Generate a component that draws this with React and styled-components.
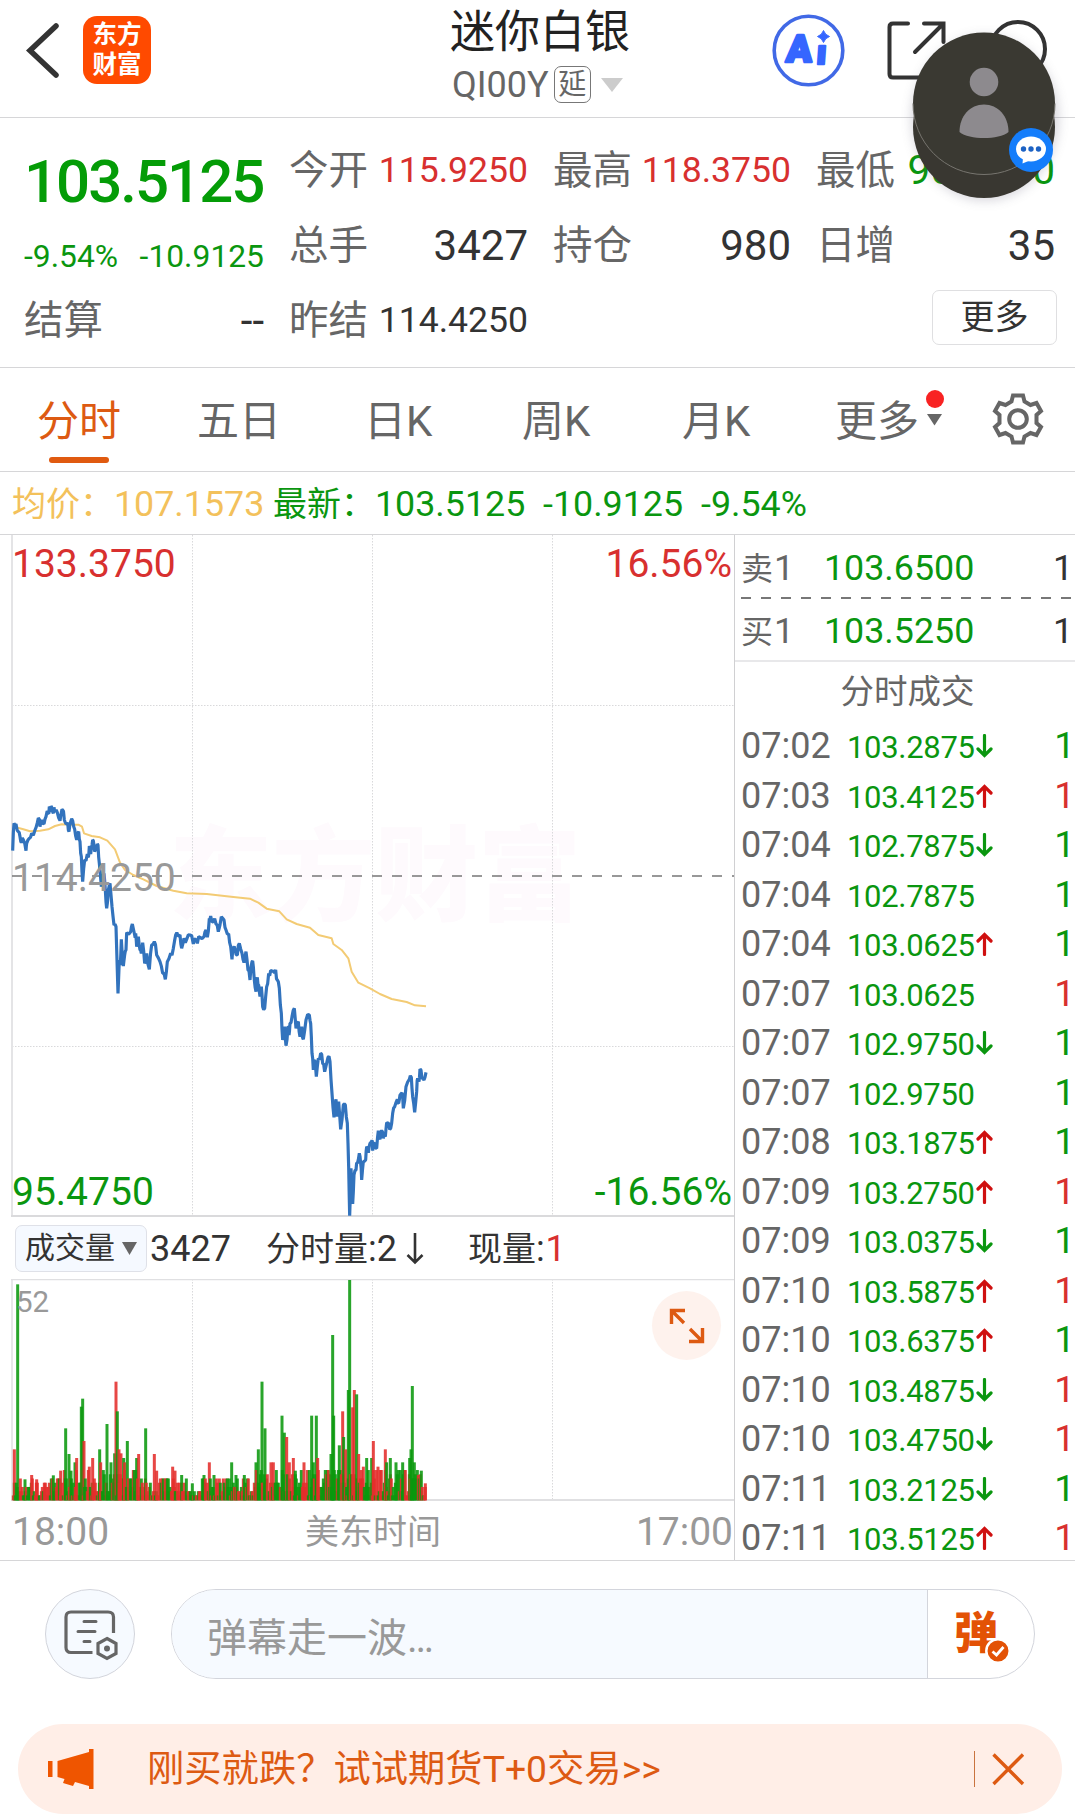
import React from 'react';
import styled, { createGlobalStyle, css } from 'styled-components';

const GREEN = '#0a960f';
const RED = '#d8302f';
const ORANGE = '#dd5a12';

const GlobalStyle = createGlobalStyle`
	* {
		box-sizing: border-box;
	}
	body {
		margin: 0;
		background: #fff;
		font-family: Roboto, 'Noto Sans CJK SC', sans-serif;
		line-height: 1;
		color: #333;
	}
	svg {
		display: block;
		flex: none;
	}
`;

const Screen = styled.div`
	position: relative;
	display: flex;
	flex-direction: column;
	width: 1075px;
	height: 1816px;
	overflow: hidden;
	white-space: nowrap;
`;

/* header */
const Header = styled.header`
	display: grid;
	grid-template-columns: 450px 180px 1fr;
	height: 118px;
	border-bottom: 1px solid #d6d6d8;
`;
const HeaderLeft = styled.div`
	display: flex;
	align-items: flex-start;
	gap: 22px;
	padding: 16px 0 0 25px;
`;
const Logo = styled.div`
	display: flex;
	flex-direction: column;
	align-items: center;
	justify-content: center;
	width: 68px;
	height: 68px;
	border-radius: 14px;
	background: #ff4a00;
	color: #fff;
	font-size: 24.5px;
	font-weight: 700;
	line-height: 30px;
`;
const TitleBlock = styled.div`
	display: flex;
	flex-direction: column;
	gap: 11px;
	padding-top: 10px;
`;
const Title = styled.h1`
	margin: 0;
	font-size: 45px;
	font-weight: 400;
	color: #222;
`;
const Code = styled.div`
	display: flex;
	align-items: center;
	height: 37px;
	font-size: 36px;
	color: #666;
	padding-left: 2px;
`;
const DelayTag = styled.span`
	display: flex;
	align-items: center;
	justify-content: center;
	width: 37px;
	height: 37px;
	margin: 0 10px 0 5px;
	border: 1px solid #777;
	border-radius: 7px;
	font-size: 28px;
`;
const HeaderRight = styled.div`
	display: flex;
	align-items: flex-start;
	padding: 14px 0 0 142px;
`;

/* quote */
const Quote = styled.section`
	display: grid;
	grid-template-columns: 240px 239px 238px 239px;
	grid-template-rows: repeat(3, 75px);
	column-gap: 25px;
	height: 250px;
	padding: 15px 20px 0 24px;
	border-bottom: 1px solid #d6d6d8;
`;
const PriceCell = styled.div`
	grid-row: span 2;
	display: flex;
	flex-direction: column;
	gap: 29px;
	padding-top: 19px;
	color: ${GREEN};
`;
const Price = styled.div`
	font-size: 60px;
	font-weight: 500;
	letter-spacing: -2px;
	color: #049c07;
`;
const Changes = styled.div`
	display: flex;
	justify-content: space-between;
	font-size: 31.8px;
`;
const Stat = styled.div`
	display: flex;
	align-items: center;
	justify-content: space-between;
	color: ${(p) => p.$color || '#333'};
	font-size: ${(p) => p.$size || 35.6}px;
`;
const StatLabel = styled.span`
	font-size: 39.5px;
	color: #666;
`;
const MoreCell = styled.div`
	display: flex;
	align-items: center;
	justify-content: flex-end;
	margin-right: -2px;
	padding-bottom: 7px;
`;
const MoreButton = styled.button`
	width: 125px;
	height: 55px;
	border: 1px solid #dfdfe1;
	border-radius: 7px;
	background: #fff;
	color: #333;
	font: inherit;
	font-size: 34px;
	padding: 0;
`;

/* tabs */
const Tabs = styled.nav`
	display: flex;
	align-items: stretch;
	height: 104px;
	padding-left: 37px;
	border-bottom: 1px solid #d6d6d8;
`;
const Tab = styled.div`
	position: relative;
	display: flex;
	align-items: center;
	width: ${(p) => p.$width}px;
	padding-top: 5px;
	font-size: 42px;
	color: ${(p) => (p.$active ? ORANGE : '#666')};
	${(p) =>
		p.$active &&
		css`
			&::after {
				content: '';
				position: absolute;
				left: 12px;
				bottom: 8px;
				width: 60px;
				height: 6px;
				border-radius: 3px;
				background: #e05a10;
			}
		`}
`;
const TabIcon = styled.div`
	display: flex;
	align-items: center;
	padding-bottom: 1px;
`;
const Dot = styled.i`
	position: absolute;
	left: 91px;
	top: 22px;
	width: 18px;
	height: 18px;
	border-radius: 50%;
	background: #f82222;
`;

const InfoRow = styled.div`
	display: flex;
	align-items: center;
	height: 63px;
	padding: 3px 0 0 12px;
	border-bottom: 1px solid #d6d6d8;
	font-size: 35.8px;
`;
const Info = styled.span`
	display: flex;
	align-items: center;
	width: ${(p) => p.$width}px;
	color: ${(p) => p.$color};
`;
const InfoLabel = styled.span`
	font-size: 34px;
`;

/* main */
const Main = styled.main`
	display: flex;
	height: 1026px;
	border-bottom: 1px solid #d6d6d8;
`;
const ChartColumn = styled.section`
	flex: none;
	width: 735px;
	padding-left: 11px;
	border-right: 1px solid #d0d0d2;
`;
const Plot = styled.div`
	position: relative;
	height: ${(p) => p.$height}px;
`;
const PlotLabel = styled.span`
	position: absolute;
	top: ${(p) => p.$top}px;
	${(p) => (p.$right ? 'right: 2px;' : `left: ${p.$left || 1}px;`)}
	font-size: ${(p) => p.$size || 39}px;
	color: ${(p) => p.$color};
`;
const Watermark = styled.div`
	position: absolute;
	left: 158px;
	top: 291px;
	font-size: 103px;
	font-weight: 900;
	color: #fefafd;
`;
const ChartLayer = styled.div`
	position: relative;
`;
const VolumeBar = styled.div`
	display: flex;
	align-items: center;
	height: 62px;
	padding: 1px 0 0 4px;
	font-size: 36px;
`;
const Indicator = styled.button`
	display: flex;
	align-items: center;
	justify-content: space-between;
	width: 132px;
	height: 47px;
	margin: -1px 3px 0 0;
	padding: 0 9px 0 9px;
	border: 1px solid #dfe1e8;
	border-radius: 7px;
	background: #f5f9ff;
	color: #333;
	font: inherit;
	font-size: 30px;
`;
const VolumeStat = styled.span`
	display: flex;
	align-items: center;
	margin-left: ${(p) => p.$gap}px;
`;
const VolumeLabel = styled.span`
	font-size: ${(p) => p.$size}px;
`;
const Current = styled.span`
	margin-left: 1px;
	color: ${RED};
`;
const ExpandButton = styled.button`
	position: absolute;
	left: 641px;
	top: 12px;
	display: grid;
	place-items: center;
	width: 69px;
	height: 69px;
	padding: 0;
	border: 0;
	border-radius: 50%;
	background: #fef2ed;
`;
const TimeAxis = styled.div`
	display: flex;
	align-items: center;
	justify-content: space-between;
	height: 61px;
	padding: 4px 1px 0 1px;
	font-size: 39px;
	color: #999;
`;
const AxisCaption = styled.span`
	padding: 0 0 2px 1px;
	font-size: 34px;
`;

/* order book and ticks */
const Side = styled.aside`
	flex: 1;
	min-width: 0;
	padding: 1px 0 0 6px;
`;
const BookRow = styled.div`
	display: grid;
	grid-template-columns: 83px 1fr auto;
	align-items: center;
	height: ${(p) => p.$height}px;
	padding: 5px 2px 0 0;
	font-size: 35.8px;
	color: #333;
`;
const BookLabel = styled.span`
	display: flex;
	align-items: center;
	gap: 1px;
	color: #666;
`;
const BookSide = styled.span`
	font-size: 32px;
`;
const BookPrice = styled.span`
	color: ${GREEN};
`;
const SideTitle = styled.h2`
	margin: 0 0 0 -6px;
	height: 61px;
	border-top: 2px solid #e8e8ea;
	font-size: 33.5px;
	font-weight: 400;
	line-height: 60px;
	text-align: center;
	text-indent: 5px;
	color: #666;
`;
const Tick = styled.div`
	display: grid;
	grid-template-columns: 106px 129px 1fr auto;
	align-items: baseline;
	height: 49.5px;
	padding: 6px 0 0 0;
	font-size: 36px;
	color: #666;
`;
const TickPrice = styled.span`
	font-size: 31px;
	color: ${GREEN};
	letter-spacing: -0.3px;
`;
const Quantity = styled.span`
	font-size: 37px;
	color: ${(p) => (p.$up ? RED : GREEN)};
`;
const ArrowIcon = styled.svg`
	margin-bottom: 3px;
`;

/* footer */
const CommentBar = styled.div`
	display: flex;
	gap: 36px;
	padding: 28px 40px 0 45px;
`;
const RoundButton = styled.button`
	display: grid;
	place-items: center;
	width: 90px;
	height: 90px;
	padding: 0;
	border: 1px solid #d3d5dc;
	border-radius: 50%;
	background: #f6faff;
`;
const CommentBox = styled.div`
	flex: 1;
	display: flex;
	height: 90px;
	border: 1px solid #d3d5dc;
	border-radius: 45px;
	overflow: hidden;
`;
const Placeholder = styled.div`
	flex: 1;
	display: flex;
	align-items: center;
	padding: 9px 0 0 35px;
	background: #f6faff;
	font-size: 40px;
	color: #999;
`;
const Barrage = styled.div`
	position: relative;
	width: 107px;
	border-left: 1px solid #d3d5dc;
	padding: 22px 0 0 26px;
	font-size: 44px;
	font-weight: 900;
	color: #e35205;
`;
const BarrageCheck = styled.svg`
	position: absolute;
	left: 57px;
	top: 48px;
`;
const Banner = styled.div`
	display: flex;
	align-items: center;
	width: 1044px;
	height: 90px;
	margin: 45px 0 0 18px;
	padding-left: 30px;
	border-radius: 45px;
	background: #ffeee7;
	color: ${ORANGE};
`;
const BannerText = styled.span`
	flex: 1;
	margin-left: 53px;
	padding-top: 1px;
	font-size: 37.3px;
`;
const BannerLine = styled.i`
	width: 1px;
	height: 36px;
	margin-right: 17px;
	background: #c9733f;
`;

const FloatingHead = styled.div`
	position: absolute;
	left: 893px;
	top: 12px;
`;

const Triangle = ({ width, height, color }) => (
	<svg width={width} height={height} viewBox="0 0 20 12" preserveAspectRatio="none">
		<path d="M0 0H20L10 12Z" fill={color} />
	</svg>
);

const stats = [
	{ label: '今开', value: '115.9250', color: RED },
	{ label: '最高', value: '118.3750', color: RED },
	{ label: '最低', value: '95.4750', color: GREEN, size: 40.6 },
	{ label: '总手', value: '3427', size: 42 },
	{ label: '持仓', value: '980', size: 42 },
	{ label: '日增', value: '35', size: 42 },
	{ label: '结算', value: '--', size: 42 },
	{ label: '昨结', value: '114.4250' },
];

const ticks = [
	['07:02', '103.2875', 'down', 0],
	['07:03', '103.4125', 'up', 1],
	['07:04', '102.7875', 'down', 0],
	['07:04', '102.7875', '', 0],
	['07:04', '103.0625', 'up', 0],
	['07:07', '103.0625', '', 1],
	['07:07', '102.9750', 'down', 0],
	['07:07', '102.9750', '', 0],
	['07:08', '103.1875', 'up', 0],
	['07:09', '103.2750', 'up', 1],
	['07:09', '103.0375', 'down', 0],
	['07:10', '103.5875', 'up', 1],
	['07:10', '103.6375', 'up', 0],
	['07:10', '103.4875', 'down', 1],
	['07:10', '103.4750', 'down', 1],
	['07:11', '103.2125', 'down', 0],
	['07:11', '103.5125', 'up', 1],
];

// chart series, in thirds of a pixel
const priceLine =
	'38,212 42,130 48,132 55,155 60,170 64,188 70,180 78,212 80,190 88,175 95,160 105,150 112,128 118,118 120,140 125,120 132,132 138,110 145,100 148,80 151,96 155,82 158,95 162,82 165,95 172,98 180,122 184,98 188,90 193,120 198,132 203,128 207,155 212,125 218,122 224,148 230,180 236,155 240,185 244,230 248,305 254,240 262,222 265,232 268,198 272,222 276,195 280,182 284,215 290,205 294,195 298,250 304,320 312,280 316,330 320,385 325,330 330,310 336,380 342,435 348,440 354,640 358,540 361,555 364,478 370,558 374,525 378,510 380,458 392,455 397,432 404,465 407,460 410,500 415,470 420,510 424,520 428,488 434,550 440,520 448,568 455,495 463,485 470,525 480,545 488,580 496,598 502,545 512,520 520,505 527,465 534,468 540,465 545,505 552,475 560,478 570,465 580,492 586,478 592,490 600,472 612,470 618,450 622,472 628,415 632,408 640,425 648,432 655,455 664,410 672,420 678,450 686,462 692,500 696,538 700,505 705,508 712,525 718,490 726,520 732,548 738,515 744,570 750,600 756,545 760,560 763,600 768,635 772,592 776,615 780,650 784,620 788,680 794,685 800,620 806,580 812,572 820,574 827,570 832,600 838,625 844,700 848,780 854,740 858,797 864,740 867,765 870,730 876,710 883,685 888,745 895,725 900,770 905,740 910,778 918,720 928,705 932,730 936,820 940,870 944,840 949,890 955,835 962,820 968,850 974,875 984,832 990,845 996,940 1002,1012 1008,958 1012,1010 1016,965 1022,1048 1030,975 1036,975 1042,1030 1046,1160 1049,1307 1053,1165 1058,1272 1062,1185 1068,1170 1072,1150 1078,1120 1082,1150 1085,1200 1090,1145 1097,1140 1100,1100 1105,1118 1110,1090 1116,1082 1118,1112 1122,1088 1130,1105 1135,1052 1140,1078 1145,1052 1150,1075 1156,1070 1160,1028 1166,1030 1172,1045 1178,1000 1184,980 1192,958 1196,970 1200,945 1206,938 1210,985 1218,920 1228,898 1234,892 1238,950 1244,997 1250,935 1253,895 1257,905 1260,867 1266,895 1272,900 1278,877';
const averageLine =
	'42,140 70,148 90,154 120,152 145,148 165,138 185,133 215,134 235,134 246,140 252,160 275,168 300,172 322,182 345,208 360,248 375,270 400,285 430,298 470,318 520,332 560,340 620,342 700,351 750,356 775,368 800,386 838,394 860,418 890,432 930,443 955,465 995,475 1000,492 1025,510 1045,535 1055,575 1075,608 1110,625 1140,642 1175,657 1220,666 1245,676 1278,679';

// [x, top, colour]
const peaks = [
	[43, 718, 'r'], [53, 223, 'g'], [75, 808, 'g'], [95, 795, 'r'], [110, 808, 'r'], [160, 796, 'g'],
	[182, 782, 'r'], [197, 655, 'g'], [207, 732, 'g'], [213, 782, 'g'], [225, 757, 'g'], [230, 744, 'r'],
	[244, 590, 'g'], [248, 566, 'g'], [252, 693, 'r'], [268, 770, 'r'], [278, 744, 'r'], [299, 718, 'g'],
	[302, 757, 'r'], [321, 642, 'g'], [333, 757, 'g'], [344, 730, 'g'], [348, 515, 'r'], [352, 604, 'g'],
	[357, 718, 'r'], [363, 730, 'r'], [371, 744, 'g'], [374, 757, 'r'], [382, 693, 'g'], [410, 744, 'g'],
	[416, 732, 'r'], [437, 655, 'g'], [463, 732, 'r'], [470, 782, 'r'], [518, 770, 'r'], [525, 782, 'r'],
	[545, 795, 'g'], [577, 820, 'g'], [612, 795, 'g'], [628, 757, 'r'], [642, 795, 'g'], [695, 757, 'g'],
	[708, 795, 'g'], [733, 795, 'g'], [768, 757, 'g'], [775, 718, 'g'], [786, 515, 'g'], [795, 655, 'g'],
	[813, 757, 'r'], [820, 757, 'r'], [846, 617, 'g'], [853, 668, 'g'], [860, 681, 'r'], [868, 757, 'r'],
	[880, 744, 'r'], [886, 782, 'g'], [912, 757, 'r'], [935, 617, 'g'], [940, 757, 'g'], [949, 617, 'g'],
	[953, 744, 'r'], [993, 732, 'g'], [998, 375, 'g'], [1001, 617, 'g'], [1018, 706, 'g'], [1028, 604, 'r'],
	[1031, 681, 'g'], [1037, 718, 'r'], [1045, 540, 'g'], [1049, 210, 'g'], [1058, 592, 'r'], [1063, 540, 'r'],
	[1070, 553, 'g'], [1076, 732, 'r'], [1090, 770, 'r'], [1100, 744, 'g'], [1115, 744, 'g'], [1120, 693, 'r'],
	[1134, 770, 'r'], [1156, 718, 'r'], [1160, 757, 'g'], [1171, 744, 'g'], [1188, 757, 'g'], [1208, 757, 'g'],
	[1229, 744, 'g'], [1233, 718, 'g'], [1237, 528, 'g'], [1243, 757, 'g'], [1255, 795, 'r'], [1264, 782, 'g'],
	[1276, 820, 'r'],
];

// [until x, highest lot count, share of red]
const activity = [
	[60, 4, 0.5],
	[185, 5, 0.55],
	[430, 7, 0.5],
	[560, 5, 0.75],
	[606, 2, 0.5],
	[760, 5, 0.4],
	[1262, 7, 0.5],
	[1300, 3, 0.8],
];

const createRandom = (start) => {
	let seed = start;
	return () => {
		seed = (seed * 16807) % 2147483647;
		return seed / 2147483647;
	};
};

const buildBars = () => {
	const bars = [];
	const next = createRandom(17);
	for (let x = 40; x < 1279; x += 3) {
		const [, lots, red] = activity.find((a) => x < a[0]);
		const size = Math.ceil(next() ** 1.1 * lots);
		bars.push([x, 869 - size * 12.7, next() < red ? 'r' : 'g']);
	}
	return [...bars, ...peaks].sort((a, b) => a[0] - b[0]);
};
const volumeBars = buildBars();

// adds the small minute to minute swings between the turning points
const addSwings = (line) => {
	const next = createRandom(5);
	const points = line.split(' ').map((p) => p.split(',').map(Number));
	return points
		.flatMap(([x, y], i) => {
			const after = points[i + 1];
			if (!after) return [[x, y]];
			const middle = (y + after[1]) / 2 + (next() - 0.5) * 26;
			return [[x, y], [(x + after[0]) / 2, Math.min(middle, 1300)]];
		})
		.join(' ');
};
const detailedPrice = addSwings(priceLine);

const PriceChart = () => (
	<svg width="723" height="682" viewBox="0 0 723 682">
		<g stroke="#d9d9db" strokeDasharray="1.5 1.5">
			<path d="M181.5 0V681M361.5 0V681M541.5 0V681M1 170.5H723M1 511.5H723" />
		</g>
		<path d="M1 0V682" stroke="#e4e4e6" strokeWidth="2" />
		<path d="M0 681H723" stroke="#dadadc" strokeWidth="2" />
		<path d="M1 341H723" stroke="#777" strokeWidth="1.6" strokeDasharray="10 10" />
		<g transform="scale(0.33333) translate(-33 735)" fill="none">
			<polyline points={averageLine} stroke="#f3cb74" strokeWidth="6" strokeLinejoin="round" />
			<polyline points={detailedPrice} stroke="#3273bd" strokeWidth="9.5" strokeLinejoin="bevel" />
		</g>
	</svg>
);

const VolumeChart = () => (
	<svg width="723" height="222" viewBox="0 0 723 222">
		<path d="M181.5 0V221M361.5 0V221M541.5 0V221" stroke="#d9d9db" strokeDasharray="1.5 1.5" />
		<path d="M0 .5H723M1 0V221" stroke="#e0e0e2" strokeWidth="1.5" />
		<path d="M0 221H723" stroke="#e0e0e2" strokeWidth="2" />
		<g transform="scale(0.33333) translate(-33 -207)">
			{volumeBars.map(([x, y, color], i) => (
				<rect
					key={i}
					x={x - 4.5}
					y={y}
					width="9"
					height={871 - y}
					fill={color === 'r' ? '#e42d2b' : '#0b980e'}
					opacity="0.88"
				/>
			))}
		</g>
	</svg>
);

const TickArrow = ({ dir }) => (
	<ArrowIcon width="17" height="24" viewBox="0 0 17 24" fill="none" strokeWidth="3.2" strokeLinecap="round">
		{dir === 'up' && <path d="M8.5 22.5V3M2 9L8.5 2.5L15 9" stroke="#cf1010" />}
		{dir === 'down' && <path d="M8.5 1.5V21M2 15L8.5 21.5L15 15" stroke="#0a960f" />}
	</ArrowIcon>
);

const AiIcon = () => (
	<svg width="73" height="73" viewBox="0 0 73 73">
		<circle cx="36.5" cy="36.5" r="34.3" fill="none" stroke="#4169e6" strokeWidth="3.6" />
		<g fill="#3566ff" stroke="#3566ff" strokeWidth="2.6" strokeLinejoin="round" transform="skewX(-4)">
			<text x="17" y="48.5" fontFamily="Roboto" fontWeight="900" fontSize="38">A</text>
			<text x="47.5" y="50" fontFamily="Roboto" fontWeight="900" fontSize="34">ı</text>
		</g>
		<path d="M51.5 16.5Q53 21 57.5 22.5Q53 24 51.5 28.5Q50 24 45.5 22.5Q50 21 51.5 16.5Z" fill="#3566ff" stroke="#3566ff" />
	</svg>
);

const FloatingAvatar = () => (
	<FloatingHead>
		<svg width="182" height="220" viewBox="0 0 182 220">
			<defs>
				<filter id="shade" x="-30%" y="-30%" width="160%" height="160%">
					<feGaussianBlur stdDeviation="6" />
				</filter>
			</defs>
			<ellipse cx="92" cy="106" rx="73" ry="82" fill="#55506a" opacity=".25" filter="url(#shade)" />
			<circle cx="91" cy="115" r="71" fill="#393731" />
			<circle cx="91" cy="91.5" r="71" fill="#3a3932" />
			<path d="M20 91.5A71 71 0 0 0 162 91.5" fill="none" stroke="#77756f" />
			<circle cx="91" cy="70" r="14.3" fill="#8d8a8e" />
			<path d="M66.5 120C66.5 104 77 92.5 91 92.5S115.5 104 115.5 120C106 128 76 128 66.5 120Z" fill="#8d8a8e" />
			<circle cx="138" cy="138" r="22" fill="#147dfb" />
			<ellipse cx="138" cy="137" rx="15" ry="12.5" fill="#fff" />
			<path d="M130 146L129.5 151.5L138 148Z" fill="#fff" />
			<g fill="#1c62c4">
				<circle cx="130.5" cy="137" r="2.7" />
				<circle cx="138" cy="137" r="2.7" />
				<circle cx="145.5" cy="137" r="2.7" />
			</g>
		</svg>
	</FloatingHead>
);

const GearIcon = () => (
	<svg width="52" height="52" viewBox="-26 -26 52 52" fill="none" stroke="#666" strokeWidth="4">
		<circle r="8.8" />
		<path d="M-5 -23.5H5L6.5 -17.5L12.5 -14L18.5 -16L23 -8L18.5 -4V4L23 8L18.5 16L12.5 14L6.5 17.5L5 23.5H-5L-6.5 17.5L-12.5 14L-18.5 16L-23 8L-18.5 4V-4L-23 -8L-18.5 -16L-12.5 -14L-6.5 -17.5Z" />
	</svg>
);

const App = () => (
	<Screen>
		<GlobalStyle />
		<Header>
			<HeaderLeft>
				<svg width="36" height="68" viewBox="0 0 36 68">
					<path d="M31 10L5 34.5L31 59" fill="none" stroke="#333" strokeWidth="5.5" strokeLinecap="round" />
				</svg>
				<Logo>
					<span>东方</span>
					<span>财富</span>
				</Logo>
			</HeaderLeft>
			<TitleBlock>
				<Title>迷你白银</Title>
				<Code>
					QI00Y
					<DelayTag>延</DelayTag>
					<Triangle width={22} height={14} color="#ccc" />
				</Code>
			</TitleBlock>
			<HeaderRight>
				<AiIcon />
				<svg width="210" height="80" viewBox="0 0 210 80" fill="none" stroke="#333" strokeWidth="4" strokeLinecap="round">
					<path d="M63 9.5H48Q44.5 9.5 44.5 13V60Q44.5 63.5 48 63.5H93Q96.5 63.5 96.5 60V54M79 9.5H98.5V28M98 10L70 38" />
					<circle cx="173" cy="35" r="27" />
				</svg>
			</HeaderRight>
		</Header>

		<Quote>
			<PriceCell>
				<Price>103.5125</Price>
				<Changes>
					<span>-9.54%</span>
					<span>-10.9125</span>
				</Changes>
			</PriceCell>
			{stats.map((s) => (
				<Stat key={s.label} $color={s.color} $size={s.size}>
					<StatLabel>{s.label}</StatLabel>
					{s.value}
				</Stat>
			))}
			<span />
			<MoreCell>
				<MoreButton>更多</MoreButton>
			</MoreCell>
		</Quote>

		<Tabs>
			<Tab $active $width={160}>分时</Tab>
			<Tab $width={167}>五日</Tab>
			<Tab $width={158}>日K</Tab>
			<Tab $width={160}>周K</Tab>
			<Tab $width={153}>月K</Tab>
			<Tab $width={157}>
				更多
				<Dot />
				<svg width="24" height="20" viewBox="0 0 24 20">
					<path d="M8 2H23L15.5 13.5Z" fill="#666" />
				</svg>
			</Tab>
			<TabIcon>
				<GearIcon />
			</TabIcon>
		</Tabs>

		<InfoRow>
			<Info $width={261} $color="#f3c15b">
				<InfoLabel>均价：</InfoLabel>107.1573
			</Info>
			<Info $width={270} $color={GREEN}>
				<InfoLabel>最新：</InfoLabel>103.5125
			</Info>
			<Info $width={158} $color={GREEN}>-10.9125</Info>
			<Info $color={GREEN}>-9.54%</Info>
		</InfoRow>

		<Main>
			<ChartColumn>
				<Plot $height={682}>
					<Watermark>东方财富</Watermark>
					<ChartLayer>
						<PriceChart />
					</ChartLayer>
					<PlotLabel $top={10} $color={RED}>133.3750</PlotLabel>
					<PlotLabel $top={10} $right $color={RED}>16.56%</PlotLabel>
					<PlotLabel $top={324} $color="#999">114.4250</PlotLabel>
					<PlotLabel $top={638} $color={GREEN}>95.4750</PlotLabel>
					<PlotLabel $top={638} $right $color={GREEN}>-16.56%</PlotLabel>
				</Plot>
				<VolumeBar>
					<Indicator>
						成交量
						<Triangle width={15} height={13} color="#666" />
					</Indicator>
					3427
					<VolumeStat $gap={35}>
						<VolumeLabel $size={34}>分时量</VolumeLabel>:2
						<svg width="34" height="34" viewBox="0 0 34 34" fill="none" stroke="#333" strokeWidth="2.6">
							<path d="M18 1V30M10.5 23L18 30.5L25.5 23" />
						</svg>
					</VolumeStat>
					<VolumeStat $gap={37}>
						<VolumeLabel $size={34}>现量</VolumeLabel>:<Current>1</Current>
					</VolumeStat>
				</VolumeBar>
				<Plot $height={221}>
					<VolumeChart />
					<PlotLabel $top={9} $left={5} $size={29.5} $color="#999">52</PlotLabel>
					<ExpandButton>
						<svg width="36" height="36" viewBox="0 0 36 36" fill="none" stroke="#dd5a12" strokeWidth="3.4">
							<path d="M2.5 16V2.5H16M3 3L15 15M33.5 20V33.5H20M33 33L21 21" />
						</svg>
					</ExpandButton>
				</Plot>
				<TimeAxis>
					<span>18:00</span>
					<AxisCaption>美东时间</AxisCaption>
					<span>17:00</span>
				</TimeAxis>
			</ChartColumn>

			<Side>
				<BookRow $height={61}>
					<BookLabel>
						<BookSide>卖</BookSide>1
					</BookLabel>
					<BookPrice>103.6500</BookPrice>
					<span>1</span>
				</BookRow>
				<svg width="334" height="2" viewBox="0 0 334 2">
					<path d="M0 1H331" stroke="#777" strokeWidth="2" strokeDasharray="10 10" />
				</svg>
				<BookRow $height={61}>
					<BookLabel>
						<BookSide>买</BookSide>1
					</BookLabel>
					<BookPrice>103.5250</BookPrice>
					<span>1</span>
				</BookRow>
				<SideTitle>分时成交</SideTitle>
				{ticks.map(([time, price, dir, up], i) => (
					<Tick key={i}>
						<span>{time}</span>
						<TickPrice>{price}</TickPrice>
						<TickArrow dir={dir} />
						<Quantity $up={up}>1</Quantity>
					</Tick>
				))}
			</Side>
		</Main>

		<CommentBar>
			<RoundButton>
				<svg width="56" height="56" viewBox="0 0 56 56" fill="none" stroke="#666" strokeWidth="3.2">
					<path d="M30.5 46.5H9Q4 46.5 4 41.5V11Q4 6 9 6H46Q51.5 6 51.5 11V27" />
					<path d="M22 15.5H34M16 25.5H33M22 35.5H28" strokeWidth="3" strokeLinecap="round" />
					<path d="M45 32.5L54 37.5V47.5L45 52.5L36 47.5V37.5Z" />
					<circle cx="45" cy="42.5" r="3" fill="#666" stroke="none" />
				</svg>
			</RoundButton>
			<CommentBox>
				<Placeholder>弹幕走一波…</Placeholder>
				<Barrage>
					弹
					<BarrageCheck width="26" height="26" viewBox="0 0 26 26">
						<circle cx="13" cy="13" r="11.7" fill="#e35205" stroke="#fff" strokeWidth="2.5" />
						<path d="M7.5 13.5L11.5 17L18.5 9" fill="none" stroke="#fff" strokeWidth="2.8" />
					</BarrageCheck>
				</Barrage>
			</CommentBox>
		</CommentBar>

		<Banner>
			<svg width="46" height="40" viewBox="0 0 46 40">
				<path d="M0 12H4.5V28H0ZM9.5 12L41 3V0H45.5V40H41V37L27 33L25 37L15 34L16.5 30L9.5 28Z" fill="#ef5500" />
			</svg>
			<BannerText>刚买就跌？试试期货T+0交易&gt;&gt;</BannerText>
			<BannerLine />
			<svg width="70" height="36" viewBox="0 0 70 36">
				<path d="M1.5 3.5L31 33M31 3.5L1.5 33" stroke="#dd5a12" strokeWidth="3.4" />
			</svg>
		</Banner>
		<FloatingAvatar />
	</Screen>
);

export default App;
